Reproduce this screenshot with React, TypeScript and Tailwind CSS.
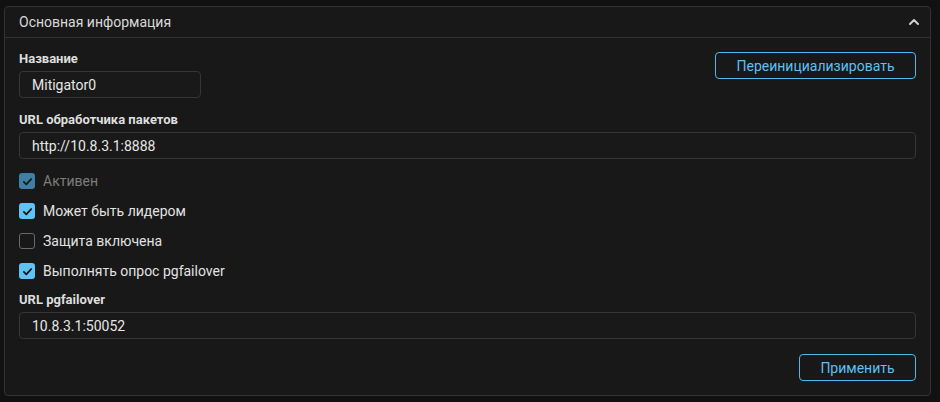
import { ChevronUp } from "lucide-react";

type CheckProps = {
    label: string
    checked: boolean
    disabled?: boolean
}

const Check = ({ label, checked, disabled }: CheckProps) => {
    return (
        <label className="flex h-4 items-center gap-2">
            <span
                className={
                    checked
                        ? disabled
                            ? "flex h-4 w-4 items-center justify-center rounded-[3px] bg-[#3f7fa3]"
                            : "flex h-4 w-4 items-center justify-center rounded-[3px] bg-[#5ec4f5]"
                        : "h-4 w-4 rounded-[3px] border border-[#6a6a6a]"
                }
            >
                {checked && (
                    <svg viewBox="0 0 16 16" className="h-[13px] w-[13px]" fill="none" stroke="#15191c" strokeWidth="2.2" strokeLinecap="round" strokeLinejoin="round">
                        <path d="M3.5 8.5l3 3 6-6.5" />
                    </svg>
                )}
            </span>
            <span className={disabled ? "text-sm text-[#7d7d7d]" : "text-sm text-[#e2e2e2]"}>{label}</span>
        </label>
    )
}

const Field = ({ label, value, className }: { label: string; value: string; className?: string }) => {
    return (
        <div className="flex flex-col gap-1">
            <div className="h-4 text-[13px] leading-4 font-bold text-[#dedede]">{label}</div>
            <div className={"flex h-[27px] items-center rounded border border-[#363636] bg-[#191919] px-3 text-sm text-[#e6e6e6] " + (className ?? "")}>
                {value}
            </div>
        </div>
    )
}

const App = () => {
    return (
        <div className="h-[402px] w-[940px] bg-[#111111] pt-[6px] pl-[4px]" style={{ fontFamily: "Roboto, 'Liberation Sans', sans-serif" }}>
            <div className="w-[927px] h-[390px] rounded border border-[#333333] bg-[#181818]">
                <div className="flex h-[31px] items-center justify-between border-b border-[#333333] pl-[14px] pr-[8px]">
                    <span className="text-sm text-[#d8d8d8]">Основная информация</span>
                    <ChevronUp className="h-4 w-4 text-[#d0d0d0]" strokeWidth={3} />
                </div>

                <div className="flex flex-col px-[14px] pt-[13px]">
                    <div className="flex items-start justify-between">
                        <Field label="Название" value="Mitigator0" className="w-[182px]" />
                        <button className="mt-[1px] h-[27px] w-[201px] rounded border border-[#4db8ee] text-sm text-[#5cc0f2]">
                            Переинициализировать
                        </button>
                    </div>

                    <div className="mt-[14px]">
                        <Field label="URL обработчика пакетов" value="http://10.8.3.1:8888" />
                    </div>

                    <div className="mt-[14px] flex flex-col gap-[14px]">
                        <Check label="Активен" checked disabled />
                        <Check label="Может быть лидером" checked />
                        <Check label="Защита включена" checked={false} />
                        <Check label="Выполнять опрос pgfailover" checked />
                    </div>

                    <div className="mt-[13px]">
                        <Field label="URL pgfailover" value="10.8.3.1:50052" />
                    </div>

                    <div className="mt-[15px] flex justify-end">
                        <button className="h-[27px] w-[117px] rounded border border-[#4db8ee] text-sm text-[#5cc0f2]">
                            Применить
                        </button>
                    </div>
                </div>
            </div>
        </div>
    )
}

export default App;
